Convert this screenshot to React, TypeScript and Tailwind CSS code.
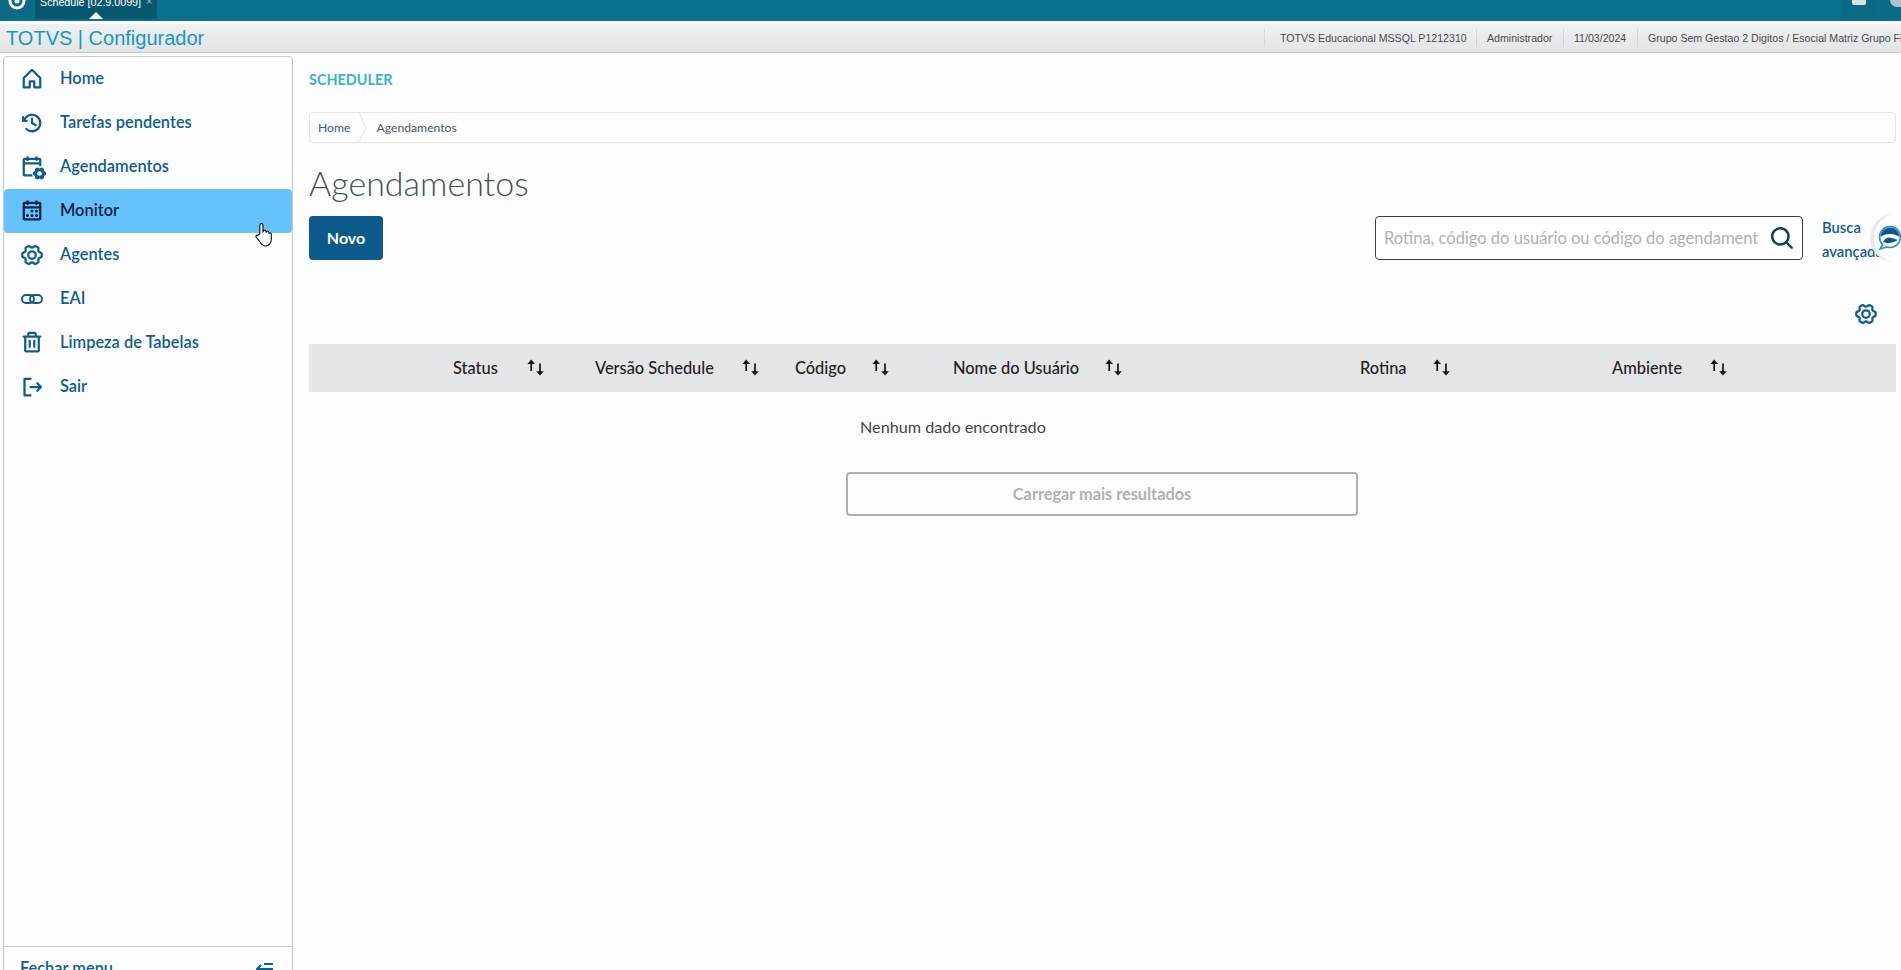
import React from "react";
import {
  PiHouseBold,
  PiClockCounterClockwiseBold,
  PiCalendarBlankBold,
  PiGearSixFill,
  PiCalendarDotsBold,
  PiGearSixBold,
  PiTrashBold,
  PiSignOutBold,
  PiMagnifyingGlassBold,
} from "react-icons/pi";

const font = "[font-family:Lato,'Noto_Sans',sans-serif]";

function AgendaIcon() {
  return (
    <span className="relative block w-6 h-6">
      <PiCalendarBlankBold size={24} />
      <span className="absolute -right-[3px] -bottom-[2px] bg-[#fdfdfd] rounded-full">
        <PiGearSixFill size={15} />
      </span>
    </span>
  );
}

function LinkIcon() {
  return (
    <svg width="24" height="24" viewBox="0 0 24 24" fill="none" stroke="currentColor" strokeWidth="2">
      <rect x="2" y="8" width="12" height="8" rx="4" />
      <rect x="10" y="8" width="12" height="8" rx="4" />
    </svg>
  );
}

const items: { label: string; icon: React.ReactNode; active?: boolean }[] = [
  { label: "Home", icon: <PiHouseBold size={24} /> },
  { label: "Tarefas pendentes", icon: <PiClockCounterClockwiseBold size={24} /> },
  { label: "Agendamentos", icon: <AgendaIcon /> },
  { label: "Monitor", icon: <PiCalendarDotsBold size={24} />, active: true },
  { label: "Agentes", icon: <PiGearSixBold size={24} /> },
  { label: "EAI", icon: <LinkIcon /> },
  { label: "Limpeza de Tabelas", icon: <PiTrashBold size={24} /> },
  { label: "Sair", icon: <PiSignOutBold size={24} /> },
];

function SortIcon() {
  return (
    <svg width="18" height="18" viewBox="0 0 18 18" fill="none" className="shrink-0">
      <path d="M4.2 12V3.5" stroke="#111" strokeWidth="1.7" />
      <path d="M4.2 0.6 8 5H0.4z" fill="#111" />
      <path d="M13 4.5V14" stroke="#111" strokeWidth="1.7" />
      <path d="M13 16.6 9.2 12.2h7.6z" fill="#111" />
    </svg>
  );
}

const cols = [
  { label: "Status", w: "w-[74px]", cell: "w-[142px]" },
  { label: "Versão Schedule", w: "w-[147px]", cell: "w-[200px]" },
  { label: "Código", w: "w-[77px]", cell: "w-[158px]" },
  { label: "Nome do Usuário", w: "w-[152px]", cell: "w-[407px]" },
  { label: "Rotina", w: "w-[73px]", cell: "w-[252px]" },
  { label: "Ambiente", w: "w-[98px]", cell: "w-[150px]" },
];

export default function App() {
  return (
    <div className={`relative h-[970px] w-full overflow-hidden flex flex-col bg-[#fdfdfd] ${font}`}>
      {/* top teal bar */}
      <div className="h-[21px] shrink-0 bg-[#09718f] flex overflow-hidden [font-family:'Liberation_Sans',sans-serif]">
        <div className="w-[34px] h-[19px] bg-[#0b6a86] flex justify-center">
          <svg width="20" height="20" viewBox="0 0 20 20" className="-mt-[9px] shrink-0" fill="none">
            <circle cx="10" cy="10" r="7" stroke="#fff" strokeWidth="3" />
            <circle cx="10" cy="10" r="2.5" fill="#fff" />
          </svg>
        </div>
        <div className="relative ml-px w-[122px] h-[19px] bg-[#07586e] text-white text-[10.7px] leading-none pl-[5px] flex gap-[5px]">
          <span className="-mt-[3px] whitespace-nowrap">Schedule [02.9.0099]</span>
          <span className="-mt-[4px] text-[#9fc4cf]">×</span>
          <span className="absolute left-[54px] bottom-0 w-0 h-0 border-x-[7px] border-x-transparent border-b-[7px] border-b-white" />
        </div>
        <div className="ml-auto flex gap-px">
          <div className="w-[37px] h-[19px] bg-[#0b6a86] pl-[11px]">
            <div className="w-[14px] h-[5px] bg-[#d8e4e8] rounded-b-[2px]" />
          </div>
          <div className="w-[22px] h-[19px] bg-[#0b6a86] pl-[11px]">
            <div className="w-[11px] h-[7px] bg-[#a9c4cd] rounded-bl-full" />
          </div>
        </div>
      </div>

      {/* header */}
      <div className="h-[32px] shrink-0 border-b border-[#c9cbcd] pt-[3px] bg-[#fdfdfd] [font-family:'Liberation_Sans',sans-serif]">
        <div className="h-full flex items-center bg-linear-to-b from-[#eff1f3] via-[#e8eaec] to-[#e2e4e6]">
          <span className="pl-[6px] text-[20px] text-[#1798c4] whitespace-nowrap">TOTVS | Configurador</span>
          <div className="ml-auto flex items-center text-[10.6px] text-[#4a4a4a] whitespace-nowrap">
            <span className="w-[212px] pl-[15px] border-l border-[#d8d8d0] leading-[18px]">TOTVS Educacional MSSQL P1212310</span>
            <span className="w-[87px] pl-[10px] border-l border-[#d8d8d0] leading-[18px]">Administrador</span>
            <span className="w-[74px] pl-[10px] border-l border-[#d8d8d0] leading-[18px]">11/03/2024</span>
            <span className="w-[264px] pl-[10px] overflow-hidden border-l border-[#d8d8d0] leading-[18px]">Grupo Sem Gestao 2 Digitos / Esocial Matriz Grupo Fiscal</span>
          </div>
        </div>
      </div>

      <div className="flex flex-1 min-h-0">
        {/* sidebar */}
        <aside className="ml-[3px] mt-[3px] w-[290px] h-[1000px] shrink-0 border border-[#c8c8c8] rounded-[4px] flex flex-col">
          <nav className="flex-none">
            {items.map((it) => (
              <div
                key={it.label}
                className={`h-[44px] flex items-center gap-[16px] pl-[16px] rounded-[4px] text-[16.4px] font-semibold ${
                  it.active ? "bg-[#66c2fd] text-[#0e2340]" : "text-[#0f5d8f]"
                }`}
              >
                {it.icon}
                <span className="-mt-[1px]">{it.label}</span>
              </div>
            ))}
          </nav>
          <div className="mt-[537px] border-t border-[#c8c8c8] pt-[9px] pl-[16px] pr-[18px] flex items-start justify-between text-[16.4px] font-semibold text-[#0f5d8f]">
            <span>Fechar menu</span>
            <svg width="18" height="16" viewBox="0 0 18 16" fill="none" stroke="#0f5d8f" strokeWidth="2" className="mt-[6px]">
              <path d="M8 2h9M1 7h16M5 3 1 7l4 4M8 12h9" />
            </svg>
          </div>
        </aside>

        {/* main */}
        <main className="flex-1 min-w-0 pl-[16px] pr-[5px]">
          <div className="mt-[17px] h-[20px] leading-[20px] text-[14.4px] font-bold text-[#38b2c8]">SCHEDULER</div>

          <div className="mt-[22px] h-[31px] pt-[1px] border border-[#e4e4e4] rounded-[4px] flex items-center text-[12.2px]">
            <span className="pl-[8px] text-[#2f5f86]">Home</span>
            <svg width="8" height="29" viewBox="0 0 8 29" fill="none" stroke="#e4e4e4" className="ml-[8px] -mt-[1px]">
              <path d="M0 0l7 14.5L0 29" />
            </svg>
            <span className="ml-[10px] text-[#4a5a60]">Agendamentos</span>
          </div>

          <h1 className="mt-[16px] h-[48px] leading-[48px] text-[34px] font-light text-[#44525a]">Agendamentos</h1>

          <div className="mt-[9px] h-[44px] flex items-center">
            <button className="w-[74px] h-[44px] bg-[#0c5a8c] text-white rounded-[4px] font-bold text-[16px]">Novo</button>
            <div className="ml-auto w-[428px] h-[44px] border border-[#3a4048] rounded-[4px] flex items-center pl-[8px] pr-[7px] bg-white">
              <input
                readOnly
                placeholder="Rotina, código do usuário ou código do agendamento"
                className="flex-1 min-w-0 bg-transparent outline-none text-[16.5px] placeholder:text-[#b0b0b0]"
              />
              <span className="ml-[11px] text-[#0c3f66]">
                <PiMagnifyingGlassBold size={26} />
              </span>
            </div>
            <div className="ml-[19px] mt-[2px] w-[74px] shrink-0 text-[14.8px] leading-[24px] font-semibold text-[#0f5d8f] whitespace-nowrap">
              <div>Busca</div>
              <div>avançada</div>
            </div>
          </div>

          <div className="mt-[42px] h-[24px] flex justify-end pr-[18px] text-[#0f5d8f]">
            <PiGearSixBold size={24} />
          </div>

          <div className="mt-[18px] h-[48px] bg-[#e4e5e7] flex items-center pl-[144px] text-[16.4px] font-medium text-[#222]">
            {cols.map((c) => (
              <div key={c.label} className={`${c.cell} shrink-0 flex items-center`}>
                <span className={`${c.w} shrink-0 whitespace-nowrap`}>{c.label}</span>
                <SortIcon />
              </div>
            ))}
          </div>

          <div className="mt-[25px] ml-[551px] h-[20px] leading-[20px] text-[16.2px] text-[#444]">Nenhum dado encontrado</div>

          <button className="block mt-[35px] ml-[537px] w-[512px] h-[44px] border-2 border-[#b0b0b0] rounded-[4px] text-[16.3px] font-bold text-[#b0b0b0]">
            Carregar mais resultados
          </button>
        </main>
      </div>

      {/* chat widget over the content */}
      <svg className="absolute right-0 top-[212px]" width="35" height="54" viewBox="0 0 35 54" fill="none">
        <circle cx="28" cy="26" r="24" fill="#e9e9e9" />
        <circle cx="33" cy="26" r="25" fill="#fdfdfd" />
        <circle cx="24" cy="25" r="10.5" stroke="#2a90d8" strokeWidth="1.6" fill="#fff" />
        <path d="M17 32l-3 5 7-2" stroke="#2a90d8" strokeWidth="1.6" fill="#fff" />
        <path d="M14.5 25a9.5 9.5 0 0 1 19 0a12 8 0 0 0-19 0z" fill="#12558c" />
        <path d="M17 30q3-6 9-4l6 2q-8 5-15 2z" fill="#12558c" />
      </svg>

      {/* mouse cursor */}
      <svg className="absolute left-[255px] top-[222px]" width="18" height="25" viewBox="0 0 17 24" fill="#fff" stroke="#000" strokeWidth="1">
        <path d="M4.5 11V3a1.5 1.5 0 0 1 3 0v7l.3-1.2a1.4 1.4 0 0 1 2.7.4v1l.2-.6a1.3 1.3 0 0 1 2.5.4v1.2a1.2 1.2 0 0 1 2.3.4V17c0 3.5-2.5 6-5.5 6S6 21.5 4.5 19L1 14.5c-.8-1 .3-2.4 1.5-1.6z" />
      </svg>
    </div>
  );
}
